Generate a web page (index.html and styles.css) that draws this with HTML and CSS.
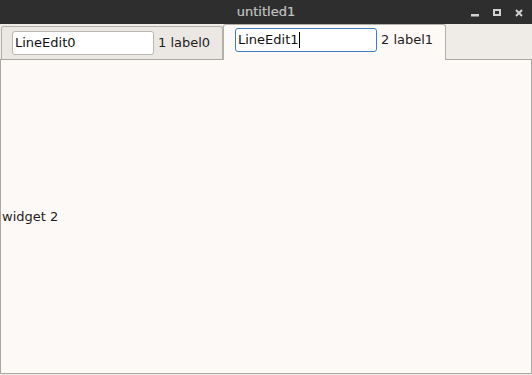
FILE: index.html
```html
<!DOCTYPE html>
<html>
<head>
<meta charset="utf-8">
<link rel="stylesheet" href="styles.css">
</head>
<body>
<div class="window">
  <div class="titlebar">
    <div></div>
    <div class="title">untitled1</div>
    <svg class="controls" width="56" height="24" viewBox="0 0 56 24">
      <rect x="1" y="14" width="8" height="2.5" fill="#d2d2d2"/>
      <rect x="24" y="10" width="6" height="5" fill="none" stroke="#d2d2d2" stroke-width="2"/>
      <path d="M46 10 L52 16 M52 10 L46 16" stroke="#d2d2d2" stroke-width="2" fill="none"/>
    </svg>
  </div>
  <div class="tabbar">
    <div class="tab inactive">
      <div class="lineedit"><span>LineEdit0</span></div>
      <span class="label">1 label0</span>
    </div>
    <div class="tab active">
      <div class="lineedit focused"><span>LineEdit1</span><span class="caret"></span></div>
      <span class="label">2 label1</span>
    </div>
  </div>
  <div class="pane">
    <span class="widget-label">widget 2</span>
  </div>
</div>
</body>
</html>
```
FILE: styles.css
```css
html, body {
  margin: 0;
  padding: 0;
}
body {
  background: #efebe7;
  font-family: "DejaVu Sans", sans-serif;
  font-size: 13px;
  color: #1c1c1c;
  width: 532px;
  height: 375px;
  overflow: hidden;
}
.window {
  display: flex;
  flex-direction: column;
  height: 375px;
}
.titlebar {
  height: 24px;
  background: #2e2e2e;
  display: grid;
  grid-template-columns: 1fr auto 1fr;
  align-items: center;
  flex: none;
}
.title {
  color: #c4c4c4;
  line-height: 24px;
  -webkit-text-stroke: 0.2px #c4c4c4;
}
.controls {
  justify-self: end;
  margin-right: 6px;
  display: block;
}
.tabbar {
  height: 35px;
  display: flex;
  align-items: flex-end;
  flex: none;
  position: relative;
  z-index: 1;
}
.tab {
  box-sizing: border-box;
  display: flex;
  align-items: center;
  border: 1px solid #b3afab;
  border-bottom: none;
  border-radius: 3px 3px 0 0;
}
.tab.inactive {
  margin-left: 1px;
  width: 222px;
  height: 33px;
  background: #ebe8e4;
  padding-left: 10px;
  padding-bottom: 1px;
}
.tab.active {
  width: 223px;
  height: 36px;
  margin-bottom: -1px;
  background: #fcf9f6;
  padding-left: 11px;
  padding-bottom: 6px;
}
.lineedit {
  box-sizing: border-box;
  width: 142px;
  height: 24px;
  background: #ffffff;
  border: 1px solid #bab6b2;
  border-radius: 3px;
  padding-left: 2px;
  display: flex;
  align-items: center;
  color: #111;
}
.lineedit.focused {
  border-color: #3f7fc1;
}
.caret {
  display: inline-block;
  width: 1px;
  height: 16px;
  background: #000;
  margin-left: 0;
}
.label {
  margin-left: 4px;
  white-space: nowrap;
}
.pane {
  box-sizing: border-box;
  height: 315px;
  background: #fcf9f6;
  border: 1px solid #aaa7a3;
  display: flex;
  align-items: center;
  padding-left: 1px;
  flex: none;
}
.widget-label {
  line-height: 15px;
}
```
